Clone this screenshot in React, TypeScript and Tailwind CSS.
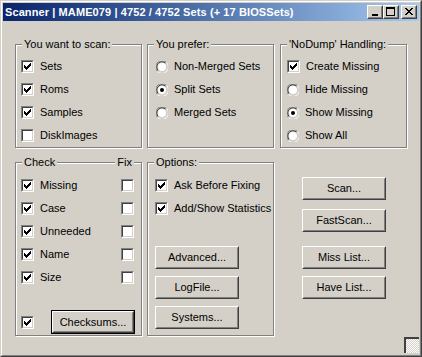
import type { ReactNode } from "react";

// classic win2k dialog: ClrMAMEPro scanner window

function CheckMark() {
  const cols = [2, 3, 4, 3, 2, 1, 0];
  return (
    <svg width="9" height="9" viewBox="0 0 9 9" shapeRendering="crispEdges" className="block">
      {cols.map((y, i) => (
        <rect key={i} x={i + 1} y={y + 1} width="1" height="3" fill="#000" />
      ))}
    </svg>
  );
}

function Check({ checked }: { checked?: boolean }) {
  return (
    <span className="block w-[13px] h-[13px] shrink-0 border border-t-[#808080] border-l-[#808080] border-b-white border-r-white">
      <span className="block w-full h-full bg-white border border-t-[#404040] border-l-[#404040] border-b-[#d4d0c8] border-r-[#d4d0c8]">
        {checked && <CheckMark />}
      </span>
    </span>
  );
}

function Radio({ checked }: { checked?: boolean }) {
  return (
    <svg width="12" height="12" viewBox="0 0 12 12" className="block shrink-0">
      <path d="M1.5 10.5 A5.8 5.8 0 0 1 10.5 1.5" stroke="#808080" strokeWidth="1" fill="none" />
      <path d="M10.5 1.5 A5.8 5.8 0 0 1 1.5 10.5" stroke="#ffffff" strokeWidth="1" fill="none" />
      <path d="M2.3 9.7 A4.8 4.8 0 0 1 9.7 2.3" stroke="#404040" strokeWidth="1" fill="none" />
      <path d="M9.7 2.3 A4.8 4.8 0 0 1 2.3 9.7" stroke="#d4d0c8" strokeWidth="1" fill="none" />
      <circle cx="6" cy="6" r="4" fill="#fff" />
      {checked && <circle cx="6" cy="6" r="2" fill="#000" />}
    </svg>
  );
}

function Row({ children }: { children: ReactNode }) {
  return <div className="flex items-center h-[13px] gap-[6px]">{children}</div>;
}

function Btn({ children, isDefault }: { children: ReactNode; isDefault?: boolean }) {
  const inner = (
    <div className="w-full h-full border border-t-white border-l-white border-b-[#404040] border-r-[#404040]">
      <div className="w-full h-full flex items-center justify-center border border-t-[#d4d0c8] border-l-[#d4d0c8] border-b-[#808080] border-r-[#808080]">
        {children}
      </div>
    </div>
  );
  if (isDefault) {
    return <div className="w-[84px] h-[24px] border border-black">{inner}</div>;
  }
  return <div className="w-[84px] h-[23px]">{inner}</div>;
}

function Group({ title, className, children }: { title: ReactNode; className: string; children: ReactNode }) {
  return (
    <div className={"border border-[#808080] shadow-[inset_1px_1px_0_#fff,1px_1px_0_#fff] " + className}>
      <div className="-mt-[7px] ml-[6px] mr-[7px] h-[13px] flex justify-between">{title}</div>
      {children}
    </div>
  );
}

function Legend({ children }: { children: ReactNode }) {
  return <span className="px-[2px] bg-[#d4d0c8]">{children}</span>;
}

export default function App() {
  return (
    <div className="w-[422px] h-[357px] border border-t-[#d4d0c8] border-l-[#d4d0c8] border-b-[#404040] border-r-[#404040] font-['Liberation_Sans',Arial,sans-serif] text-[11px] leading-[13px] text-black select-none">
      <div className="w-full h-full border border-t-white border-l-white border-b-[#808080] border-r-[#808080] bg-[#d4d0c8] p-px flex flex-col">
        {/* title bar */}
        <div className="h-[18px] shrink-0 flex items-center pl-[2px] pr-[2px] bg-gradient-to-r from-[#0a246a] to-[#a6caf0]">
          <span className="flex-1 text-white font-bold text-[11px] tracking-[0.1px] whitespace-nowrap">
            Scanner | MAME079 | 4752 / 4752 Sets (+ 17 BIOSSets)
          </span>
          <div className="flex items-center">
            <TitleBtn kind="min" />
            <TitleBtn kind="max" />
            <div className="w-[2px]" />
            <TitleBtn kind="close" />
          </div>
        </div>

        {/* body */}
        <div className="flex-1 flex flex-col pl-[12px] pt-[23px]">
          <div className="flex h-[104px]">
            <Group title={<Legend>You want to scan:</Legend>} className="w-[127px] h-full">
              <div className="mt-[9px] pl-[5px] flex flex-col gap-[10px]">
                <Row><Check checked />Sets</Row>
                <Row><Check checked />Roms</Row>
                <Row><Check checked />Samples</Row>
                <Row><Check />DiskImages</Row>
              </div>
            </Group>
            <Group title={<Legend>You prefer:</Legend>} className="w-[127px] h-full ml-[5px]">
              <div className="mt-[9px] pl-[8px] flex flex-col gap-[10px]">
                <Row><Radio />Non-Merged Sets</Row>
                <Row><Radio checked />Split Sets</Row>
                <Row><Radio />Merged Sets</Row>
              </div>
            </Group>
            <Group title={<Legend>'NoDump' Handling:</Legend>} className="w-[127px] h-full ml-[6px]">
              <div className="mt-[9px] pl-[6px] flex flex-col gap-[10px]">
                <Row><Check checked />Create Missing</Row>
                <Row><Radio />Hide Missing</Row>
                <Row><Radio checked />Show Missing</Row>
                <Row><Radio />Show All</Row>
              </div>
            </Group>
          </div>

          <div className="flex h-[174px] mt-[14px]">
            <Group
              title={
                <>
                  <Legend>Check</Legend>
                  <Legend>Fix</Legend>
                </>
              }
              className="w-[127px] h-full"
            >
              <div className="mt-[10px] pl-[5px] pr-[7px] flex flex-col gap-[10px]">
                {["Missing", "Case", "Unneeded", "Name", "Size"].map((t) => (
                  <div key={t} className="flex items-center justify-between h-[13px]">
                    <Row><Check checked />{t}</Row>
                    <Check />
                  </div>
                ))}
              </div>
              <div className="mt-[26px] pl-[5px] flex items-center gap-[17px]">
                <Check checked />
                <Btn isDefault>Checksums...</Btn>
              </div>
            </Group>
            <Group title={<Legend>Options:</Legend>} className="w-[127px] h-full ml-[5px]">
              <div className="mt-[10px] pl-[7px] flex flex-col gap-[10px]">
                <Row><Check checked />Ask Before Fixing</Row>
                <Row><Check checked />Add/Show Statistics</Row>
              </div>
              <div className="mt-[31px] pl-[7px] flex flex-col gap-[7px]">
                <Btn>Advanced...</Btn>
                <Btn>LogFile...</Btn>
                <Btn>Systems...</Btn>
              </div>
            </Group>
            <div className="ml-[28px] pt-[15px] flex flex-col">
              <Btn>Scan...</Btn>
              <div className="h-[9px]" />
              <Btn>FastScan...</Btn>
              <div className="h-[14px]" />
              <Btn>Miss List...</Btn>
              <div className="h-[7px]" />
              <Btn>Have List...</Btn>
            </div>
          </div>

          <div className="flex justify-end mt-px">
            <div className="w-[15px] h-[16px] border-t-2 border-l-2 border-t-[#404040] border-l-[#404040] bg-[repeating-conic-gradient(#ffffff_0_25%,#d4d0c8_0_50%)] bg-[length:2px_2px]" />
          </div>
        </div>
      </div>
    </div>
  );
}

function TitleBtn({ kind }: { kind: "min" | "max" | "close" }) {
  return (
    <div className="w-[16px] h-[14px] border border-t-white border-l-white border-b-[#404040] border-r-[#404040]">
      <div className="w-full h-full border border-t-[#d4d0c8] border-l-[#d4d0c8] border-b-[#808080] border-r-[#808080] bg-[#d4d0c8]">
        <svg width="12" height="10" viewBox="0 0 12 10" shapeRendering="crispEdges" className="block">
          {kind === "min" && <rect x="3" y="7" width="6" height="2" fill="#000" />}
          {kind === "max" && (
            <>
              <rect x="1" y="0" width="9" height="2" fill="#000" />
              <rect x="1" y="0" width="1" height="9" fill="#000" />
              <rect x="9" y="0" width="1" height="9" fill="#000" />
              <rect x="1" y="8" width="9" height="1" fill="#000" />
            </>
          )}
          {kind === "close" && (
            <path d="M2 1h2l1.5 2h1L8 1h2L7 4.5 10 8H8L6.5 6h-1L4 8H2l3-3.5z" fill="#000" />
          )}
        </svg>
      </div>
    </div>
  );
}
